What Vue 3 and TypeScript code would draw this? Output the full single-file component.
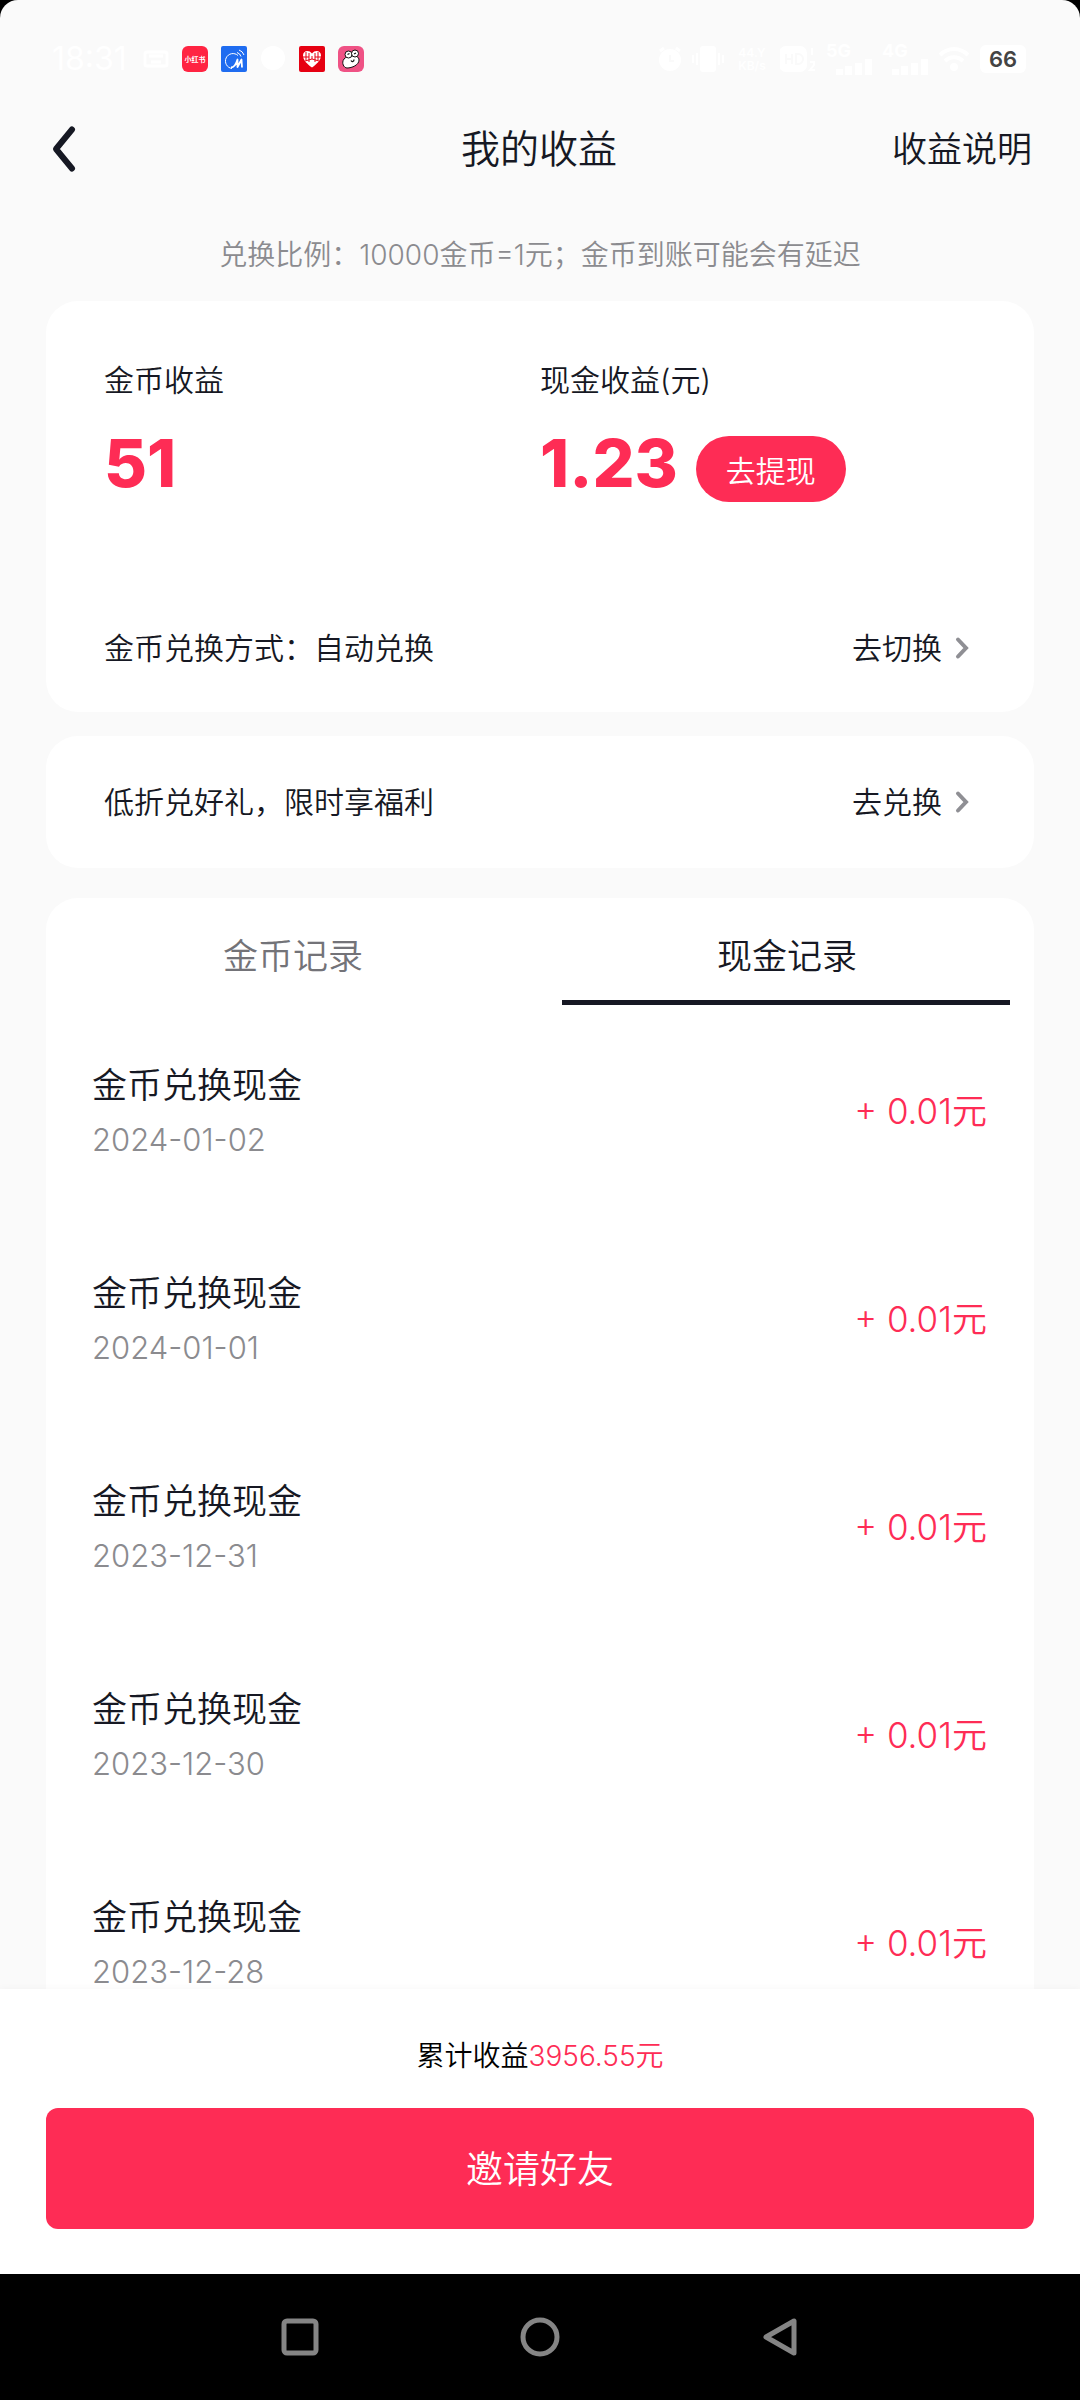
<script setup lang="ts">
import { ref } from 'vue'

interface EarningRecord {
  title: string
  date: string
  amount: string
}

const tabs = ['金币记录', '现金记录']
const activeTab = ref(1)

const records: EarningRecord[] = [
  { title: '金币兑换现金', date: '2024-01-02', amount: '+ 0.01元' },
  { title: '金币兑换现金', date: '2024-01-01', amount: '+ 0.01元' },
  { title: '金币兑换现金', date: '2023-12-31', amount: '+ 0.01元' },
  { title: '金币兑换现金', date: '2023-12-30', amount: '+ 0.01元' },
  { title: '金币兑换现金', date: '2023-12-28', amount: '+ 0.01元' },
]
</script>

<template>
  <div class="device">
    <div class="screen">
      <div class="status">
        <div class="status-left">
          <span class="clock">18:31</span>
          <svg width="26" height="26" viewBox="0 0 26 26" fill="none" stroke="#fff" stroke-width="3" aria-hidden="true">
            <rect x="2" y="6" width="22" height="14" rx="2" />
            <path d="M6 10h14M8 16h10" />
          </svg>
          <svg width="26" height="26" viewBox="0 0 26 26" aria-hidden="true">
            <rect width="26" height="26" rx="6" fill="#ff2442" />
            <text x="13" y="16" text-anchor="middle" class="badge-text">小红书</text>
          </svg>
          <svg width="26" height="26" viewBox="0 0 26 26" fill="none" stroke="#fff" aria-hidden="true">
            <rect width="26" height="26" rx="2" fill="#1f6cf0" stroke="none" />
            <path d="M17 9.500A7.500 7.500 0 1 0 11 22.500" stroke-width="1" />
            <path d="M10 21.500c3 0 5-3 6.500-8v7.500l4-7.500.5 8" stroke-width="1.800" stroke-linejoin="round" />
            <path d="M16 6.500a6 6 0 0 1 4 4M18 4a8 8 0 0 1 5 5" stroke-width="1" />
          </svg>
          <svg width="26" height="26" viewBox="0 0 26 26" aria-hidden="true">
            <circle cx="13" cy="12" r="12" fill="#fff" />
          </svg>
          <svg width="26" height="26" viewBox="0 0 26 26" fill="none" aria-hidden="true">
            <rect width="26" height="26" rx="2" fill="#e60012" />
            <path d="M13 21.500C8 18 4 14 4 9.500 4 4.500 10 3.500 13 7.500c3-4 9-3 9 2 0 4.500-4 8.500-9 12z" fill="#fff" />
            <path d="M4 11h6M16 11h6M7 6v8M19 6v8M10 7v9M16 7v9M6 15l7-2 7 2M13 10v3" stroke="#e60012" stroke-width="1" />
          </svg>
          <svg width="26" height="26" viewBox="0 0 26 26" aria-hidden="true">
            <rect width="26" height="26" rx="6" fill="#ef5285" />
            <path d="M6 13c-3 4 0 9 3 9 5 0 12-3 12-8 0-3-3-5-8-4-3 0-5 1-7 3z" fill="#fff" stroke="#111" />
            <circle cx="10.500" cy="8.500" r="3.500" fill="#fff" stroke="#111" />
            <circle cx="17" cy="7.500" r="3.500" fill="#fff" stroke="#111" />
            <path d="M9.500 8.500l2-1M16 8l2-1M13 14.500c1 2 3 1 3-1" fill="none" stroke="#111" stroke-width="1.300" />
          </svg>
        </div>
        <div class="status-right">
          <svg width="24" height="26" viewBox="0 0 24 26" aria-hidden="true">
            <circle cx="12" cy="14" r="11" fill="#fff" />
            <path d="M2 5l4-3M22 5l-4-3" stroke="#fff" stroke-width="3" />
            <path d="M12 9v6h4" fill="none" stroke="#fafafa" stroke-width="2" />
          </svg>
          <svg width="32" height="26" viewBox="0 0 32 26" fill="none" stroke="#fff" stroke-width="2" aria-hidden="true">
            <rect x="9" y="1" width="14" height="24" rx="2" fill="#fff" />
            <path d="M5 7v12M27 7v12M1 9v8M31 9v8" />
          </svg>
          <span class="speed">44.Y<br />KB/s</span>
          <svg width="36" height="26" viewBox="0 0 36 26" fill="none" stroke="#fff" stroke-width="2" aria-hidden="true">
            <rect x="0" y="1" width="26" height="24" rx="6" fill="#fff" />
            <path d="M6 8v10M12 8v10M6 13h6M16 8v10h2a5 5 0 0 0 0-10z" stroke="#fafafa" />
            <path d="M32 2v7M30 16h4v3l-4 5h5" />
          </svg>
          <span class="network">5G<svg width="36" height="16" viewBox="0 0 36 16" fill="#fff" aria-hidden="true"><path d="M0 10h7v6H0zM9 7h7v9H9zM19 4h7v12h-7zM29 0h7v16h-7z" /></svg></span>
          <span class="network">4G<svg width="36" height="16" viewBox="0 0 36 16" fill="#fff" aria-hidden="true"><path d="M0 10h7v6H0zM9 7h7v9H9zM19 4h7v12h-7zM29 0h7v16h-7z" /></svg></span>
          <svg width="32" height="26" viewBox="0 0 32 26" fill="none" stroke="#fff" stroke-width="4" aria-hidden="true">
            <path d="M2 9c8-8 20-8 28 0M7 15c5-5 13-5 18 0" />
            <circle cx="16" cy="21" r="2" />
          </svg>
          <span class="battery">66</span>
        </div>
      </div>

      <header class="header">
        <button class="back" type="button" aria-label="返回">
          <svg width="36" height="48" viewBox="0 0 36 48" fill="none" stroke="#161823" stroke-width="6" stroke-linecap="round" stroke-linejoin="round" aria-hidden="true">
            <path d="M26 4.500L10 24l16 19.500" />
          </svg>
        </button>
        <h1 class="title">我的收益</h1>
        <a class="explain" href="#">收益说明</a>
      </header>

      <main class="content">
        <p class="notice">兑换比例：10000金币=1元；金币到账可能会有延迟</p>

        <section class="card summary">
          <div class="balances">
            <div>
              <h2 class="label">金币收益</h2>
              <div class="balance"><strong class="value">51</strong></div>
            </div>
            <div>
              <h2 class="label">现金收益(元)</h2>
              <div class="balance">
                <strong class="value">1.23</strong>
                <button class="withdraw" type="button">去提现</button>
              </div>
            </div>
          </div>
          <div class="line">
            <span>金币兑换方式：自动兑换</span>
            <a class="go" href="#">去切换
              <svg width="28" height="28" viewBox="0 0 28 28" fill="none" stroke="#8f8f94" stroke-width="4" stroke-linecap="round" aria-hidden="true">
                <path d="M10 5.500l8 8.500-8 8.500" />
              </svg>
            </a>
          </div>
        </section>

        <section class="card promo">
          <div class="line">
            <span>低折兑好礼，限时享福利</span>
            <a class="go" href="#">去兑换
              <svg width="28" height="28" viewBox="0 0 28 28" fill="none" stroke="#8f8f94" stroke-width="4" stroke-linecap="round" aria-hidden="true">
                <path d="M10 5.500l8 8.500-8 8.500" />
              </svg>
            </a>
          </div>
        </section>

        <section class="card records">
          <div class="tabs" role="tablist">
            <button
              v-for="(tab, index) in tabs"
              :key="tab"
              type="button"
              role="tab"
              class="tab"
              :class="{ active: index === activeTab }"
              :aria-selected="index === activeTab"
              @click="activeTab = index"
            >{{ tab }}</button>
          </div>
          <ul class="list">
            <li v-for="record in records" :key="record.date" class="record">
              <div>
                <div class="record-title">{{ record.title }}</div>
                <time class="record-date">{{ record.date }}</time>
              </div>
              <span class="record-amount">{{ record.amount }}</span>
            </li>
          </ul>
        </section>
      </main>

      <footer class="footer">
        <p class="total">累计收益<span class="total-value">3956.55元</span></p>
        <button class="invite" type="button">邀请好友</button>
      </footer>
    </div>

    <nav class="system-nav">
      <button type="button" aria-label="最近任务">
        <svg width="40" height="40" viewBox="0 0 40 40" fill="none" stroke="#858585" stroke-width="5" aria-hidden="true">
          <rect x="4" y="4" width="32" height="32" rx="3" />
        </svg>
      </button>
      <button type="button" aria-label="主屏幕">
        <svg width="40" height="40" viewBox="0 0 40 40" fill="none" stroke="#858585" stroke-width="5" aria-hidden="true">
          <circle cx="20" cy="20" r="17" />
        </svg>
      </button>
      <button type="button" aria-label="返回上一级">
        <svg width="40" height="40" viewBox="0 0 40 40" fill="none" stroke="#858585" stroke-width="5" stroke-linejoin="round" aria-hidden="true">
          <path d="M34 4v32L6 20z" />
        </svg>
      </button>
    </nav>
  </div>
</template>

<style>
body {
  background: #000;
}
</style>

<style scoped>
.device {
  display: flex;
  flex-direction: column;
  height: 100vh;
  background: #000;
  color: #161823;
  font-family: Inter, "Noto Sans CJK SC", sans-serif;
  font-weight: 350;
}

.screen {
  flex: 1;
  min-height: 0;
  display: flex;
  flex-direction: column;
  overflow: hidden;
  border-radius: 18px 18px 0 0;
  background: #fafafa;
}

h1,
h2,
p,
ul {
  margin: 0;
  padding: 0;
  font-weight: inherit;
}

button {
  padding: 0;
  border: 0;
  background: none;
  color: inherit;
  font: inherit;
  cursor: pointer;
}

a {
  color: inherit;
  text-decoration: none;
}

svg {
  display: block;
  flex: none;
}

.status {
  display: flex;
  flex: none;
  align-items: center;
  justify-content: space-between;
  height: 118px;
  padding: 0 54px 0 52px;
  color: #fff;
}

.status-left {
  display: flex;
  align-items: center;
  gap: 13px;
}

.clock {
  width: 78px;
  font-size: 32px;
  line-height: 32px;
  font-weight: 400;
}

.badge-text {
  fill: #fff;
  font-size: 7px;
  font-weight: 700;
}

.status-right {
  display: flex;
  align-items: center;
  gap: 10px;
}

.speed {
  width: 36px;
  font-size: 12px;
  line-height: 13px;
  font-weight: 600;
  text-align: center;
}

.network {
  display: flex;
  flex-direction: column;
  align-items: flex-start;
  width: 46px;
  font-size: 18px;
  line-height: 16px;
  font-weight: 700;
}

.network svg {
  align-self: flex-end;
}

.battery {
  width: 46px;
  border-radius: 6px;
  background: #fff;
  color: #444;
  font-size: 22px;
  line-height: 28px;
  font-weight: 600;
  text-align: center;
}

.header {
  display: grid;
  flex: none;
  grid-template-columns: 1fr auto 1fr;
  align-items: center;
  height: 62px;
  padding: 0 48px 0 46px;
}

.back {
  justify-self: start;
}

.title {
  font-size: 39px;
  line-height: 60px;
}

.explain {
  justify-self: end;
  font-size: 35px;
  line-height: 60px;
}

.content {
  flex: 1;
  min-height: 0;
  overflow: hidden;
  padding: 55px 46px 0;
}

.notice {
  margin-bottom: 26px;
  color: #8b8b8f;
  font-size: 28px;
  line-height: 40px;
  text-align: center;
}

.card {
  border-radius: 32px;
  background: #fff;
}

.summary {
  padding: 59px 58px 44px;
}

.balances {
  display: grid;
  grid-template-columns: 1fr 1fr;
  margin-bottom: 126px;
}

.label {
  font-size: 30px;
  line-height: 40px;
}

.balance {
  display: flex;
  align-items: flex-start;
  gap: 18px;
  height: 66px;
  margin-top: 36px;
}

.value {
  color: #fe2c55;
  font-size: 66px;
  line-height: 54px;
  font-weight: 800;
}

.withdraw {
  width: 150px;
  height: 66px;
  border-radius: 33px;
  background: #fe2c55;
  color: #fff;
  font-size: 30px;
}

.line {
  display: flex;
  align-items: center;
  justify-content: space-between;
  font-size: 30px;
  line-height: 40px;
}

.go {
  display: flex;
  align-items: center;
  gap: 6px;
}

.promo {
  margin-top: 24px;
  padding: 46px 58px;
}

.records {
  margin-top: 30px;
}

.tabs {
  display: flex;
  padding-bottom: 2px;
}

.tab {
  flex: 1;
  padding-top: 38px;
  color: #737378;
  font-size: 35px;
  line-height: 40px;
}

.tab::after {
  content: "";
  display: block;
  height: 5px;
  margin: 24px 24px 0 22px;
}

.active {
  color: #161823;
}

.active::after {
  background: #161823;
}

.list {
  list-style: none;
}

.record {
  display: flex;
  align-items: center;
  justify-content: space-between;
  padding: 54px 47px 54px 46px;
}

.record-title {
  margin-bottom: 10px;
  font-size: 35px;
  line-height: 48px;
}

.record-date {
  display: block;
  color: #8b8b8f;
  font-size: 31px;
  line-height: 42px;
}

.record-amount {
  color: #fe2c55;
  font-size: 35px;
  line-height: 48px;
}

.footer {
  position: relative;
  flex: none;
  padding: 47px 46px 45px;
  background: #fff;
  box-shadow: 0 0 8px rgba(0, 0, 0, 0.04);
}

.total {
  margin-bottom: 32px;
  color: #000;
  font-size: 28px;
  line-height: 40px;
  text-align: center;
}

.total-value {
  color: #fe2c55;
}

.invite {
  display: block;
  width: 100%;
  height: 121px;
  padding-bottom: 4px;
  border-radius: 12px;
  background: #fe2c55;
  color: #fff;
  font-size: 37px;
}

.system-nav {
  display: flex;
  flex: none;
  align-items: center;
  justify-content: center;
  gap: 200px;
  height: 126px;
  background: #000;
}
</style>
